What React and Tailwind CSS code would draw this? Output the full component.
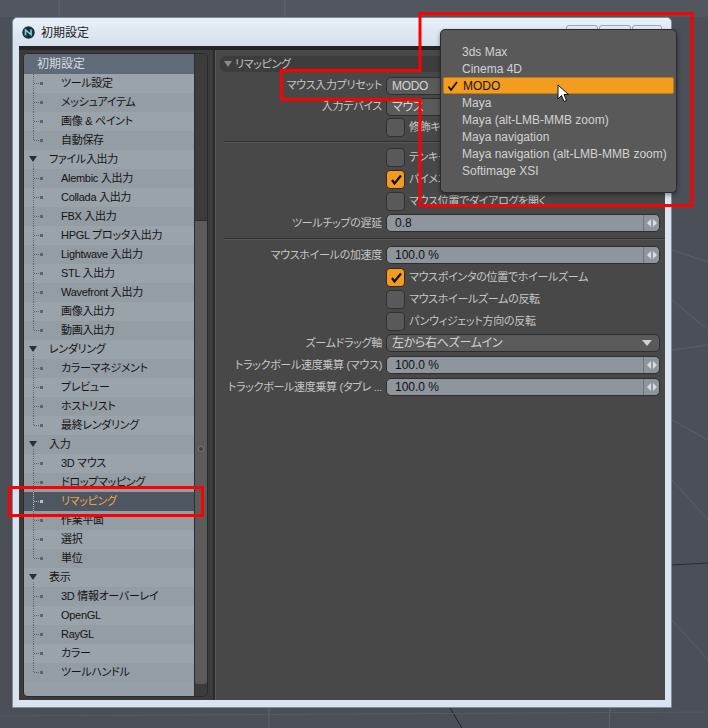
import React from "react"

const font = "font-['Liberation_Sans','Noto_Sans_CJK_JP',sans-serif] [font-feature-settings:'palt']"

const tree = [
    { label: 'ツール設定', kind: 'child' },
    { label: 'メッシュアイテム', kind: 'child' },
    { label: '画像 & ペイント', kind: 'child' },
    { label: '自動保存', kind: 'child', last: true },
    { label: 'ファイル入出力', kind: 'group' },
    { label: 'Alembic 入出力', kind: 'child' },
    { label: 'Collada 入出力', kind: 'child' },
    { label: 'FBX 入出力', kind: 'child' },
    { label: 'HPGL プロッタ入出力', kind: 'child' },
    { label: 'Lightwave 入出力', kind: 'child' },
    { label: 'STL 入出力', kind: 'child' },
    { label: 'Wavefront 入出力', kind: 'child' },
    { label: '画像入出力', kind: 'child' },
    { label: '動画入出力', kind: 'child', last: true },
    { label: 'レンダリング', kind: 'group' },
    { label: 'カラーマネジメント', kind: 'child' },
    { label: 'プレビュー', kind: 'child' },
    { label: 'ホストリスト', kind: 'child' },
    { label: '最終レンダリング', kind: 'child', last: true },
    { label: '入力', kind: 'group' },
    { label: '3D マウス', kind: 'child' },
    { label: 'ドロップマッピング', kind: 'child' },
    { label: 'リマッピング', kind: 'child', selected: true },
    { label: '作業平面', kind: 'child' },
    { label: '選択', kind: 'child' },
    { label: '単位', kind: 'child', last: true },
    { label: '表示', kind: 'group' },
    { label: '3D 情報オーバーレイ', kind: 'child' },
    { label: 'OpenGL', kind: 'child' },
    { label: 'RayGL', kind: 'child' },
    { label: 'カラー', kind: 'child' },
    { label: 'ツールハンドル', kind: 'child', last: true },
]

const presets = [
    '3ds Max',
    'Cinema 4D',
    'MODO',
    'Maya',
    'Maya (alt-LMB-MMB zoom)',
    'Maya navigation',
    'Maya navigation (alt-LMB-MMB zoom)',
    'Softimage XSI',
]

const TreeRow = ({ item, idx }) => {
    const bg = item.selected ? 'bg-[#4e5661]' : idx % 2 ? 'bg-[#949ca4]' : 'bg-[#9aa2aa]'
    const line = item.selected ? '#b8bec4' : '#5d646b'
    return (
        <div className={`flex items-center h-[19px] ${bg}`}>
            {item.kind === 'group' ? (
                <>
                    <svg width="25" height="19" className="shrink-0">
                        <polygon points="5,6 13,6 9,12" fill="#2b2f33" />
                        <line x1="9.5" y1="14" x2="9.5" y2="19" stroke={line} strokeDasharray="1 1" />
                    </svg>
                    <span className="text-[#141414] whitespace-nowrap">{item.label}</span>
                </>
            ) : (
                <>
                    <svg width="37" height="19" className="shrink-0">
                        <line x1="9.5" y1="0" x2="9.5" y2={item.last ? 9.5 : 19} stroke={line} strokeDasharray="1 1" />
                        <line x1="10" y1="9.5" x2="16" y2="9.5" stroke={line} strokeDasharray="1 1" />
                        <rect x="16" y="8" width="3" height="3" fill={line} />
                    </svg>
                    <span className={`whitespace-nowrap ${item.selected ? 'text-[#f2a53a]' : 'text-[#141414]'}`}>{item.label}</span>
                </>
            )}
        </div>
    )
}

const Spinner = () => (
    <div className="w-[16px] h-full border-l border-[#6c737a] flex items-center justify-center shrink-0">
        <svg width="10" height="8">
            <polygon points="4,0 4,8 0,4" fill="#d8dde2" />
            <polygon points="6,0 6,8 10,4" fill="#d8dde2" />
        </svg>
    </div>
)

const NumField = ({ value }) => (
    <div className="w-[274px] h-[18px] rounded-[5px] bg-[#8e959d] border border-[#2e2e2e] flex items-center overflow-hidden text-[12px] tracking-normal">
        <span className="flex-1 pl-[8px] text-[#121212]">{value}</span>
        <Spinner />
    </div>
)

const DropField = ({ value }) => (
    <div className="w-[274px] h-[18px] rounded-[5px] bg-[#5a5a5a] border border-[#2e2e2e] flex items-center overflow-hidden text-[12px] tracking-[-0.3px]">
        <span className="flex-1 pl-[5px] text-[#d4d4d4]">{value}</span>
        <svg width="10" height="6" className="mr-[7px]">
            <polygon points="0,0 10,0 5,6" fill="#d0d0d0" />
        </svg>
    </div>
)

const Check = ({ on }) => (
    <div className={`w-[19px] h-[19px] rounded-[4px] border shrink-0 flex items-center justify-center ${on ? 'bg-[#f19b22] border-[#3a2a10]' : 'bg-[#595959] border-[#303030]'}`}>
        {on && (
            <svg width="12" height="11">
                <path d="M2,6 L4.5,9.5 L11,1.5" stroke="#111" strokeWidth="2.2" fill="none" />
            </svg>
        )}
    </div>
)

const Row = ({ label, h = 'h-[22px]', children }) => (
    <div className={`flex items-center gap-[4px] ${h}`}>
        <div className="w-[162px] shrink-0 text-right whitespace-nowrap text-[#c6c6c6]">{label}</div>
        {children}
    </div>
)

const CheckRow = ({ on, label, h }) => (
    <Row label="" h={h}>
        <Check on={on} />
        <span className="text-[#c6c6c6] whitespace-nowrap">{label}</span>
    </Row>
)

const Separator = ({ h = 'h-[8px]' }) => (
    <div className={`${h} flex items-center ml-[4px] -mr-[5px]`}>
        <div className="w-full border-t border-[#2f2f2f] border-b-[#575757] border-b" />
    </div>
)

const App = () => {
    return (
        <div className={`relative w-[708px] h-[728px] overflow-hidden bg-[#4a4f58] pt-[17px] pl-[12px] text-[11px] tracking-[-0.3px] ${font}`}>
            {/* viewport grid behind the window */}
            <svg className="absolute inset-0" width="708" height="728">
                <rect width="708" height="17" fill="#52575f" />
                <line x1="59" y1="0" x2="59" y2="17" stroke="#61666e" />
                <line x1="285" y1="0" x2="285" y2="17" stroke="#61666e" />
                <line x1="672" y1="250" x2="708" y2="262" stroke="#5a6069" />
                <line x1="672" y1="300" x2="708" y2="330" stroke="#5a6069" />
                <line x1="672" y1="350" x2="708" y2="345" stroke="#5a6069" />
                <line x1="672" y1="420" x2="708" y2="440" stroke="#5a6069" />
                <line x1="672" y1="480" x2="708" y2="520" stroke="#5a6069" />
                <line x1="672" y1="565" x2="708" y2="563" stroke="#2a2d33" />
                <line x1="672" y1="620" x2="708" y2="660" stroke="#5a6069" />
                <line x1="269" y1="708" x2="269" y2="728" stroke="#5f646c" />
                <line x1="450" y1="708" x2="462" y2="728" stroke="#1e2024" />
                <line x1="610" y1="708" x2="609" y2="728" stroke="#5f646c" />
                <line x1="0" y1="716" x2="708" y2="712" stroke="#555a63" />
            </svg>

            {/* window */}
            <div className="relative w-[660px] h-[691px] flex flex-col rounded-t-[5px] border border-[#7f8b98] bg-[#d9e4f0]">
                <div className="h-[28px] flex items-center pl-[9px] pr-[9px] shrink-0 bg-gradient-to-b from-[#e8eff7] to-[#d6e1ed] rounded-t-[5px]">
                    <svg width="13" height="13" className="shrink-0">
                        <circle cx="6.5" cy="6.5" r="6.2" fill="#1d2f37" />
                        <path d="M3.5,9.5 L3.5,4 L9,8.5 L9,3.5" stroke="#7fd0d8" strokeWidth="1.6" fill="none" />
                    </svg>
                    <span className="ml-[6px] text-[12px] tracking-normal text-[#222] font-['Noto_Sans_CJK_JP',sans-serif]">初期設定</span>
                    <div className="ml-auto flex gap-[1px] self-start mt-[7px]">
                        <div className="w-[32px] h-[18px] rounded-[3px] border border-[#9aa7b5] bg-[#e4ebf3]" />
                        <div className="w-[32px] h-[18px] rounded-[3px] border border-[#9aa7b5] bg-[#e4ebf3]" />
                        <div className="w-[30px] h-[18px] rounded-[3px] border border-[#9aa7b5] bg-[#e4ebf3]" />
                    </div>
                </div>

                <div className="flex-1 ml-[6px] mr-[7px] mb-[7px] flex flex-col bg-[#3b3b3b]">
                    <div className="h-[4px] bg-[#242424] shrink-0" />
                    <div className="flex-1 flex">
                        {/* sidebar */}
                        <div className="w-[194px] shrink-0 pt-[3px] pl-[4px] pr-[5px] pb-[3px] flex">
                            <div className="flex-1 flex rounded-[5px] border border-[#2a2a2a] overflow-hidden bg-[#3a3a3a]">
                                <div className="w-[170px] bg-[#969ea6] flex flex-col">
                                    <div className="h-[20px] bg-[#5f6b78] flex items-center pl-[13px] text-[12px] tracking-normal text-[#d6dbe0]">初期設定</div>
                                    {tree.map((item, i) => (
                                        <TreeRow key={i} item={item} idx={i} />
                                    ))}
                                </div>
                                <div className="flex-1 flex flex-col border-l border-[#2e2e2e]">
                                    <div className="h-[166px] bg-[#3c3c3c]" />
                                    <div className="flex-1 bg-[#5b5b5b] rounded-b-[3px] border-t border-[#2f2f2f] flex flex-col items-center pt-[225px]">
                                        <div className="w-[6px] h-[6px] rounded-full bg-[#3f3f3f] border border-[#777]" />
                                    </div>
                                    <div className="h-[12px] bg-[#3c3c3c]" />
                                </div>
                            </div>
                        </div>

                        {/* settings panel */}
                        <div className="flex-1 bg-[#484848] border-l-[2px] border-[#2a2a2a] shadow-[inset_1px_0_0_#5a5a5a] pt-[6px] px-[5px] flex flex-col">
                            <div className="h-[16px] rounded-[6px] bg-[#3d3d3d] flex items-center pl-[4px] text-[#c4c4c4] mb-[3px]">
                                <svg width="8" height="6" className="mr-[3px]">
                                    <polygon points="0,0 8,0 4,6" fill="#8a8a8a" />
                                </svg>
                                リマッピング
                            </div>
                            <Row label="マウス入力プリセット" h="h-[21px]"><DropField value="MODO" /></Row>
                            <Row label="入力デバイス" h="h-[21px]"><DropField value="マウス" /></Row>
                            <CheckRow label="修飾キー" h="h-[21px]" />
                            <Separator h="h-[8px]" />
                            <CheckRow label="テンキー" />
                            <CheckRow on label="パイメニュー" />
                            <CheckRow label="マウス位置でダイアログを開く" />
                            <Row label="ツールチップの遅延"><NumField value="0.8" /></Row>
                            <Separator h="h-[10px]" />
                            <Row label="マウスホイールの加速度"><NumField value="100.0 %" /></Row>
                            <CheckRow on label="マウスポインタの位置でホイールズーム" />
                            <CheckRow label="マウスホイールズームの反転" />
                            <CheckRow label="パンウィジェット方向の反転" />
                            <Row label="ズームドラッグ軸"><DropField value="左から右へズームイン" /></Row>
                            <Row label="トラックボール速度乗算 (マウス)"><NumField value="100.0 %" /></Row>
                            <Row label="トラックボール速度乗算 (タブレ ..."><NumField value="100.0 %" /></Row>
                        </div>
                    </div>
                </div>
            </div>

            {/* open preset menu */}
            <div className="absolute left-[440px] top-[29px] w-[237px] h-[164px] rounded-[5px] bg-[#595959] border border-[#2c2c2c] shadow-[0_2px_4px_rgba(0,0,0,0.4)] pt-[13px] px-[2px] text-[12px] tracking-normal">
                {presets.map((p) => (
                    <div
                        key={p}
                        className={`h-[17px] flex items-center whitespace-nowrap ${p === 'MODO' ? 'bg-[#f29c20] border border-[#c27a12] rounded-[2px] text-[#151515]' : 'text-[#d2d2d2]'}`}
                    >
                        <span className="w-[19px] shrink-0 flex justify-start pl-[3px]">
                            {p === 'MODO' && (
                                <svg width="11" height="10">
                                    <path d="M1.5,5.5 L4,9 L10,1" stroke="#111" strokeWidth="1.8" fill="none" />
                                </svg>
                            )}
                        </span>
                        {p}
                    </div>
                ))}
            </div>

            {/* mouse cursor */}
            <svg className="absolute left-[557px] top-[84px]" width="13" height="20">
                <path d="M1,1 L1,15 L4.5,11.5 L7,17.5 L9.5,16.5 L7,10.5 L11.5,10.5 Z" fill="#fff" stroke="#111" strokeWidth="1" />
            </svg>

            {/* red annotation outlines */}
            <svg className="absolute inset-0 pointer-events-none" width="708" height="728">
                <path d="M420,13.5 H692 V205.5 H420 V99.5 H281.5 V70.5 H420 Z" fill="none" stroke="#ff0000" strokeWidth="3" />
                <rect x="9.5" y="487.5" width="193" height="28" fill="none" stroke="#ff0000" strokeWidth="3" />
            </svg>
        </div>
    )
}

export default App
